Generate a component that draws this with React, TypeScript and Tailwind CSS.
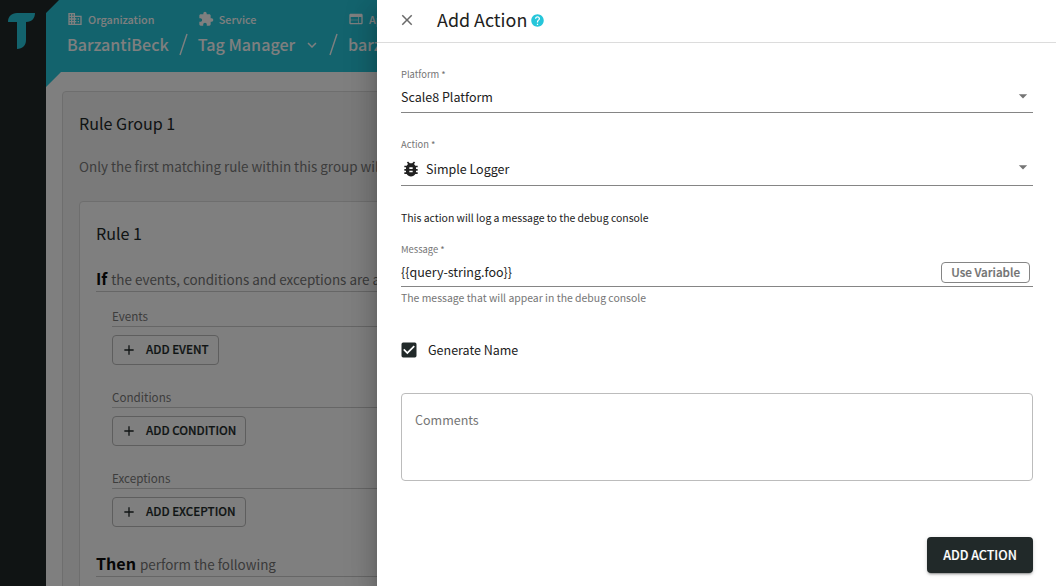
import React from "react";
import {
  MdAdd,
  MdArrowDropDown,
  MdBugReport,
  MdCheckBox,
  MdClose,
  MdDomain,
  MdExtension,
  MdHelp,
  MdKeyboardArrowDown,
  MdWeb,
} from "react-icons/md";

function Logo() {
  return (
    <svg className="mt-[13px] ml-2 h-9 w-[27px]" viewBox="0 0 27 36" fill="#26c6da">
      <path d="M0 9C0 3.500 3.500 0 9 0H27C27 5 24 9 18 9V27C18 32.500 14.500 36 9 36V9Z" />
    </svg>
  );
}

type CrumbProps = { icon: React.ReactNode; label: string; name: string; menu?: boolean };

function Crumb({ icon, label, name, menu }: CrumbProps) {
  return (
    <div className="flex shrink-0 flex-col pt-[11px]">
      <div className="flex h-4 items-center gap-[5px] text-[10.8px] leading-4 font-medium">
        {icon}
        <span>{label}</span>
      </div>
      <div className="mt-[5px] flex h-6 items-center gap-2 text-[16.1px] leading-6 font-medium">
        <span>{name}</span>
        {menu && <MdKeyboardArrowDown className="mt-px -mr-[2px] size-[18px]" />}
      </div>
    </div>
  );
}

function Slash() {
  return (
    <svg className="mt-[33px] h-[23px] w-[9px] shrink-0" viewBox="0 0 9 23" fill="none" stroke="currentColor" strokeWidth="1.400">
      <path d="M1 22L8 1" />
    </svg>
  );
}

function RuleSection({ title, button }: { title: string; button: string }) {
  return (
    <div className="h-[81px] pl-4">
      <div className="h-[19px] border-b border-[#cccccc] text-[11.65px] leading-[16px] text-[#7a7a7a]">{title}</div>
      <button className="mt-2 flex h-[30px] items-center gap-[9px] rounded-[4px] border border-[#bcbcbc] pr-[9px] pl-2 text-[11.65px] leading-[28px] font-medium text-[#212929] [-webkit-text-stroke:0.2px_#212929]">
        <MdAdd className="size-4" />
        <span className="-mt-[2px]">{button}</span>
      </button>
    </div>
  );
}

function Lead({ word, text }: { word: string; text: string }) {
  return (
    <div className="flex h-6 items-baseline gap-1 border-b border-[#cccccc] leading-5">
      <span className="text-[16.1px] font-bold text-[#0c0c0c]">{word}</span>
      <span className="text-[13.43px] whitespace-nowrap text-[#757575]">{text}</span>
    </div>
  );
}

function Backdrop() {
  return (
    <div className="flex h-[586px] w-[1056px] overflow-hidden">
      <aside className="w-[46px] shrink-0 bg-[#212929]">
        <Logo />
      </aside>
      <div className="min-w-0 flex-1 bg-white">
        <header className="h-[72px] bg-[#212929]">
          <div className="flex h-[87px] gap-[10px] bg-[#26c6da] pl-[21px] text-white [clip-path:polygon(13px_0,100%_0,100%_72px,15px_72px,0_87px,0_13px)]">
            <Crumb icon={<MdDomain className="size-4" />} label="Organization" name="BarzantiBeck" />
            <Slash />
            <Crumb icon={<MdExtension className="size-4" />} label="Service" name="Tag Manager" menu />
            <Slash />
            <Crumb icon={<MdWeb className="size-4" />} label="App" name="barzantibeck.com" />
          </div>
        </header>
        <main className="pt-[19px] pl-4">
          <section className="h-[520px] rounded-tl-[4px] border border-[#dcdcdc] bg-[#f5f5f5] pt-[19px] pl-4">
            <h2 className="text-[16.1px] leading-6 text-[#212929]">Rule Group 1</h2>
            <p className="mt-[19px] text-[13.43px] leading-6 whitespace-nowrap text-[#7a7a7a]">
              Only the first matching rule within this group will
            </p>
            <div className="mt-[23px] h-[400px] rounded-tl-[4px] border border-[#dcdcdc] bg-white pt-[19px] pl-4">
              <h3 className="text-[16.1px] leading-6 text-[#212929]">Rule 1</h3>
              <div className="mt-[23px]">
                <Lead word="If" text="the events, conditions and exceptions are all" />
              </div>
              <div className="mt-4">
                <RuleSection title="Events" button="ADD EVENT" />
                <RuleSection title="Conditions" button="ADD CONDITION" />
                <RuleSection title="Exceptions" button="ADD EXCEPTION" />
              </div>
              <div className="mt-[2px]">
                <Lead word="Then" text="perform the following" />
              </div>
            </div>
          </section>
        </main>
      </div>
    </div>
  );
}

function Label({ children }: { children: React.ReactNode }) {
  return <div className="h-3 text-[9.4px] leading-3 text-[#757575]">{children}</div>;
}

function Drawer() {
  return (
    <div className="absolute top-0 right-0 flex h-[586px] w-[679px] flex-col bg-white text-[12.5px] text-[#212121] shadow-[0_8px_10px_-5px_rgba(0,0,0,0.2),0_16px_24px_2px_rgba(0,0,0,0.14),0_6px_30px_5px_rgba(0,0,0,0.12)]">
      <div className="flex h-[43px] shrink-0 items-center border-b border-[#dcdcdc] pb-[2px] pl-[21px]">
        <MdClose className="size-[18px] text-[#6a6a6a]" />
        <h1 className="-mt-[2px] ml-[21px] text-[17.9px] leading-6">Add Action</h1>
        <MdHelp className="ml-[3px] size-[15px] text-[#26c6da]" />
      </div>
      <div className="flex flex-col pr-[23px] pl-6">
        <div className="mt-[25px]">
          <Label>Platform *</Label>
          <div className="flex h-[33px] items-center justify-between border-b border-[#858585] pt-[2px]">
            <span className="leading-5">Scale8 Platform</span>
            <MdArrowDropDown className="mb-[2px] size-5 text-[#757575]" />
          </div>
        </div>
        <div className="mt-[25px]">
          <Label>Action *</Label>
          <div className="flex h-9 items-center border-b border-[#858585] pt-[2px]">
            <MdBugReport className="size-5" />
            <span className="ml-[5px] leading-5">Simple Logger</span>
            <MdArrowDropDown className="mb-1 ml-auto size-5 text-[#757575]" />
          </div>
        </div>
        <p className="mt-6 text-[10.44px] leading-4">This action will log a message to the debug console</p>
        <div className="mt-[17px]">
          <Label>Message *</Label>
          <div className="flex h-8 items-center justify-between border-b border-[#858585] pt-[2px] pr-[3px]">
            <span className="leading-5">{"{{query-string.foo}}"}</span>
            <button className="mt-px flex h-[21px] rounded-[4px] border border-[#858585] px-[9px] text-[11.65px] leading-[17px] font-medium text-[#707070] [-webkit-text-stroke:0.2px_#707070]">
              Use Variable
            </button>
          </div>
          <div className="mt-[3px] text-[10.44px] leading-4 text-[#757575]">The message that will appear in the debug console</div>
        </div>
        <label className="mt-[34px] flex h-5 items-center">
          <MdCheckBox className="-ml-[2px] size-5 text-[#212929]" />
          <span className="ml-[9px] leading-5">Generate Name</span>
        </label>
        <div className="mt-[33px] h-[88px] rounded-[4px] border border-[#bcbcbc] px-[13px] pt-4 leading-5 text-[#757575]">Comments</div>
        <button className="mt-14 h-9 w-[106px] self-end rounded-[4px] bg-[#212929] leading-9 font-medium text-white shadow-[0_3px_1px_-2px_rgba(0,0,0,0.2),0_2px_2px_0_rgba(0,0,0,0.14),0_1px_5px_0_rgba(0,0,0,0.12)] [-webkit-text-stroke:0.15px_#ffffff]">
          ADD ACTION
        </button>
      </div>
    </div>
  );
}

export default function App() {
  return (
    <div className="relative h-[586px] w-[1056px] overflow-hidden font-['Noto_Sans_CJK_SC',sans-serif]">
      <Backdrop />
      <div className="absolute inset-0 bg-black/50" />
      <Drawer />
    </div>
  );
}
